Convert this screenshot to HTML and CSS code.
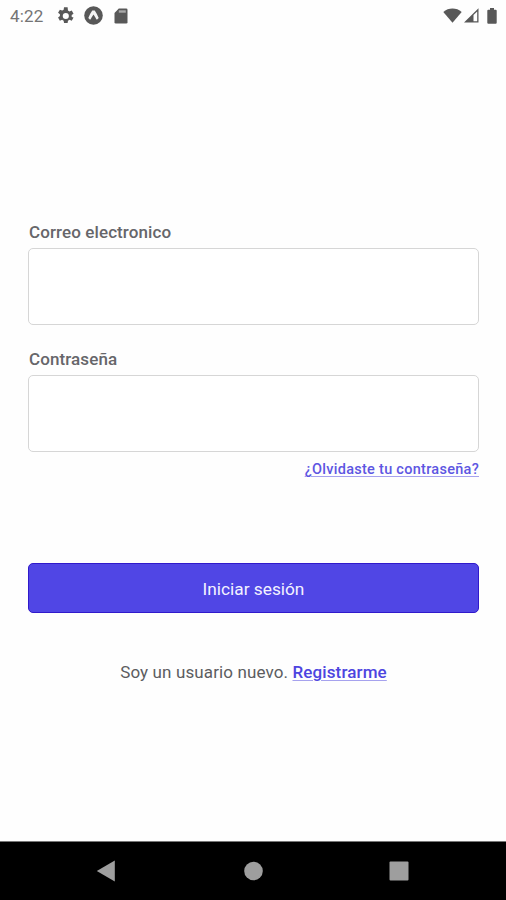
FILE: index.html
```html
<!DOCTYPE html>
<html lang="es">
<head>
<meta charset="utf-8">
<title>Iniciar sesión</title>
<link rel="stylesheet" href="styles.css">
</head>
<body>
<header class="status">
  <span class="clock">4:22</span>
  <svg class="gear" width="18" height="18" viewBox="2 2 20 20"><path fill-rule="evenodd" d="M19.400 13c.04-.32.06-.66.06-1s-.02-.66-.07-1l2.100-1.600-2-3.500-2.500 1a7.500 7.500 0 0 0-1.700-1L14.900 2.400h-4l-.4 2.600a7.500 7.500 0 0 0-1.700 1l-2.500-1-2 3.500 2.100 1.600a7 7 0 0 0 0 2l-2.100 1.600 2 3.500 2.500-1c.5.4 1.100.750 1.700 1l.4 2.600h4l.4-2.600a7.500 7.500 0 0 0 1.700-1l2.500 1 2-3.500zM12.900 15.400a3.400 3.400 0 1 1 0-6.800 3.400 3.400 0 0 1 0 6.800z"/></svg>
  <svg class="expo" width="19" height="19" viewBox="0 0 19 19"><circle cx="9.500" cy="9.500" r="9.300"/><path class="light" d="M8.300 4.500h2.400c1.600 2.200 2.800 4.900 4 7.600l-1.800 1.700c-1.200-1.500-2-3.500-3.400-5.400-1.400 1.900-2.200 3.900-3.400 5.400l-1.800-1.700c1.200-2.700 2.400-5.400 4-7.600z"/></svg>
  <svg class="card" width="14" height="16" viewBox="0 0 14 16"><path d="M4.800.5h7.400q1.300 0 1.300 1.300v12.400q0 1.300-1.300 1.300H1.800q-1.300 0-1.300-1.300V5z"/><path class="slots" d="M4.800 2.300h7v2.400h-7z"/></svg>
  <svg class="wifi" width="19" height="15" viewBox="0 0 19 15"><path d="M.3 4C5.500-.6 13.500-.6 18.700 4L9.500 14.800z"/></svg>
  <svg class="signal" width="15" height="15" viewBox="0 0 15 15"><path fill-rule="evenodd" d="M0 14.500 14.500.3v14.200zM9.500 7v6.200h3.700V3.400z"/></svg>
  <svg class="battery" width="10" height="16" viewBox="0 0 10 16"><path d="M3 0h4v1.700h1.700q1 0 1 1v12q0 1-1 1H1.300q-1 0-1-1v-12q0-1 1-1H3z"/></svg>
</header>
<main class="screen">
  <form class="login">
    <label class="label" for="email">Correo electronico</label>
    <input class="field" id="email" type="email">
    <label class="label" for="password">Contraseña</label>
    <input class="field" id="password" type="password">
    <a class="link forgot">¿Olvidaste tu contraseña?</a>
    <button class="submit" type="button">Iniciar sesión</button>
    <p class="signup">Soy un usuario nuevo. <a class="link">Registrarme</a></p>
  </form>
</main>
<nav class="navbar">
  <svg width="20" height="22" viewBox="0 0 20 22"><path d="M.8 11 18.800.5v21z"/></svg>
  <svg width="20" height="20" viewBox="0 0 20 20"><circle cx="10.500" cy="10" r="9.300"/></svg>
  <svg width="20" height="20" viewBox="0 0 20 20"><rect x=".5" y=".5" width="19" height="19" rx="1"/></svg>
</nav>
</body>
</html>
```
FILE: styles.css
```css
* { box-sizing: border-box; }
body {
  margin: 0;
  height: 900px;
  display: flex;
  flex-direction: column;
  background: #fefefe;
  font-family: Roboto, sans-serif;
  color: #5c5c60;
}
svg { display: block; flex: none; }
.status {
  height: 32px;
  display: flex;
  align-items: center;
  padding: 0 9px 0 10px;
  fill: #585858;
}
.clock { width: 47px; font-size: 17px; color: #747474; letter-spacing: .2px; }
.gear { margin-left: -1px; }
.expo { margin: -1px 0 0 10px; }
.expo .light { fill: #f4f4f4; }
.card { margin-left: 11px; }
.card .slots { fill: #a8a8a8; }
.wifi { margin: -2px 2px 0 auto; }
.signal { margin: -2px 8px 0 0; }
.battery { margin-top: -1px; }
.screen { flex: 1; padding: 188px 27px 0 28px; }
.login { display: flex; flex-direction: column; }
.label {
  height: 28px;
  padding-left: 1px;
  font-size: 17px;
  letter-spacing: .1px;
  font-weight: 500;
  line-height: 24px;
  color: #66666a;
}
.field {
  height: 77px;
  margin: 0 0 22px;
  border: 1.500px solid #d6d6d6;
  border-radius: 5px;
  background: #fff;
  outline: 0;
}
.link {
  color: #4d45e0;
  font-weight: 500;
  text-decoration: underline 1px #a6a2ee;
  text-underline-offset: 2px;
}
.forgot {
  align-self: flex-end;
  height: 20px;
  margin-top: -14px;
  font-size: 14.500px;
  letter-spacing: .28px;
  line-height: 20px;
  color: #5d56e2;
}
.submit {
  height: 50px;
  margin-top: 83px;
  padding: 2px 0 0;
  border: 1.500px solid #3019cb;
  border-radius: 5px;
  background: #5046e5;
  color: #f3f2ff;
  font: 400 17.300px Roboto, sans-serif;
}
.signup {
  margin: 48px 0 0;
  font-size: 17px;
  letter-spacing: .12px;
  line-height: 22px;
  text-align: center;
}
.navbar {
  height: 59px;
  display: flex;
  align-items: center;
  justify-content: space-between;
  padding: 0 97px 0 96px;
  border-top: 1px solid #777;
  background: #000;
  fill: #9e9e9e;
}
```
